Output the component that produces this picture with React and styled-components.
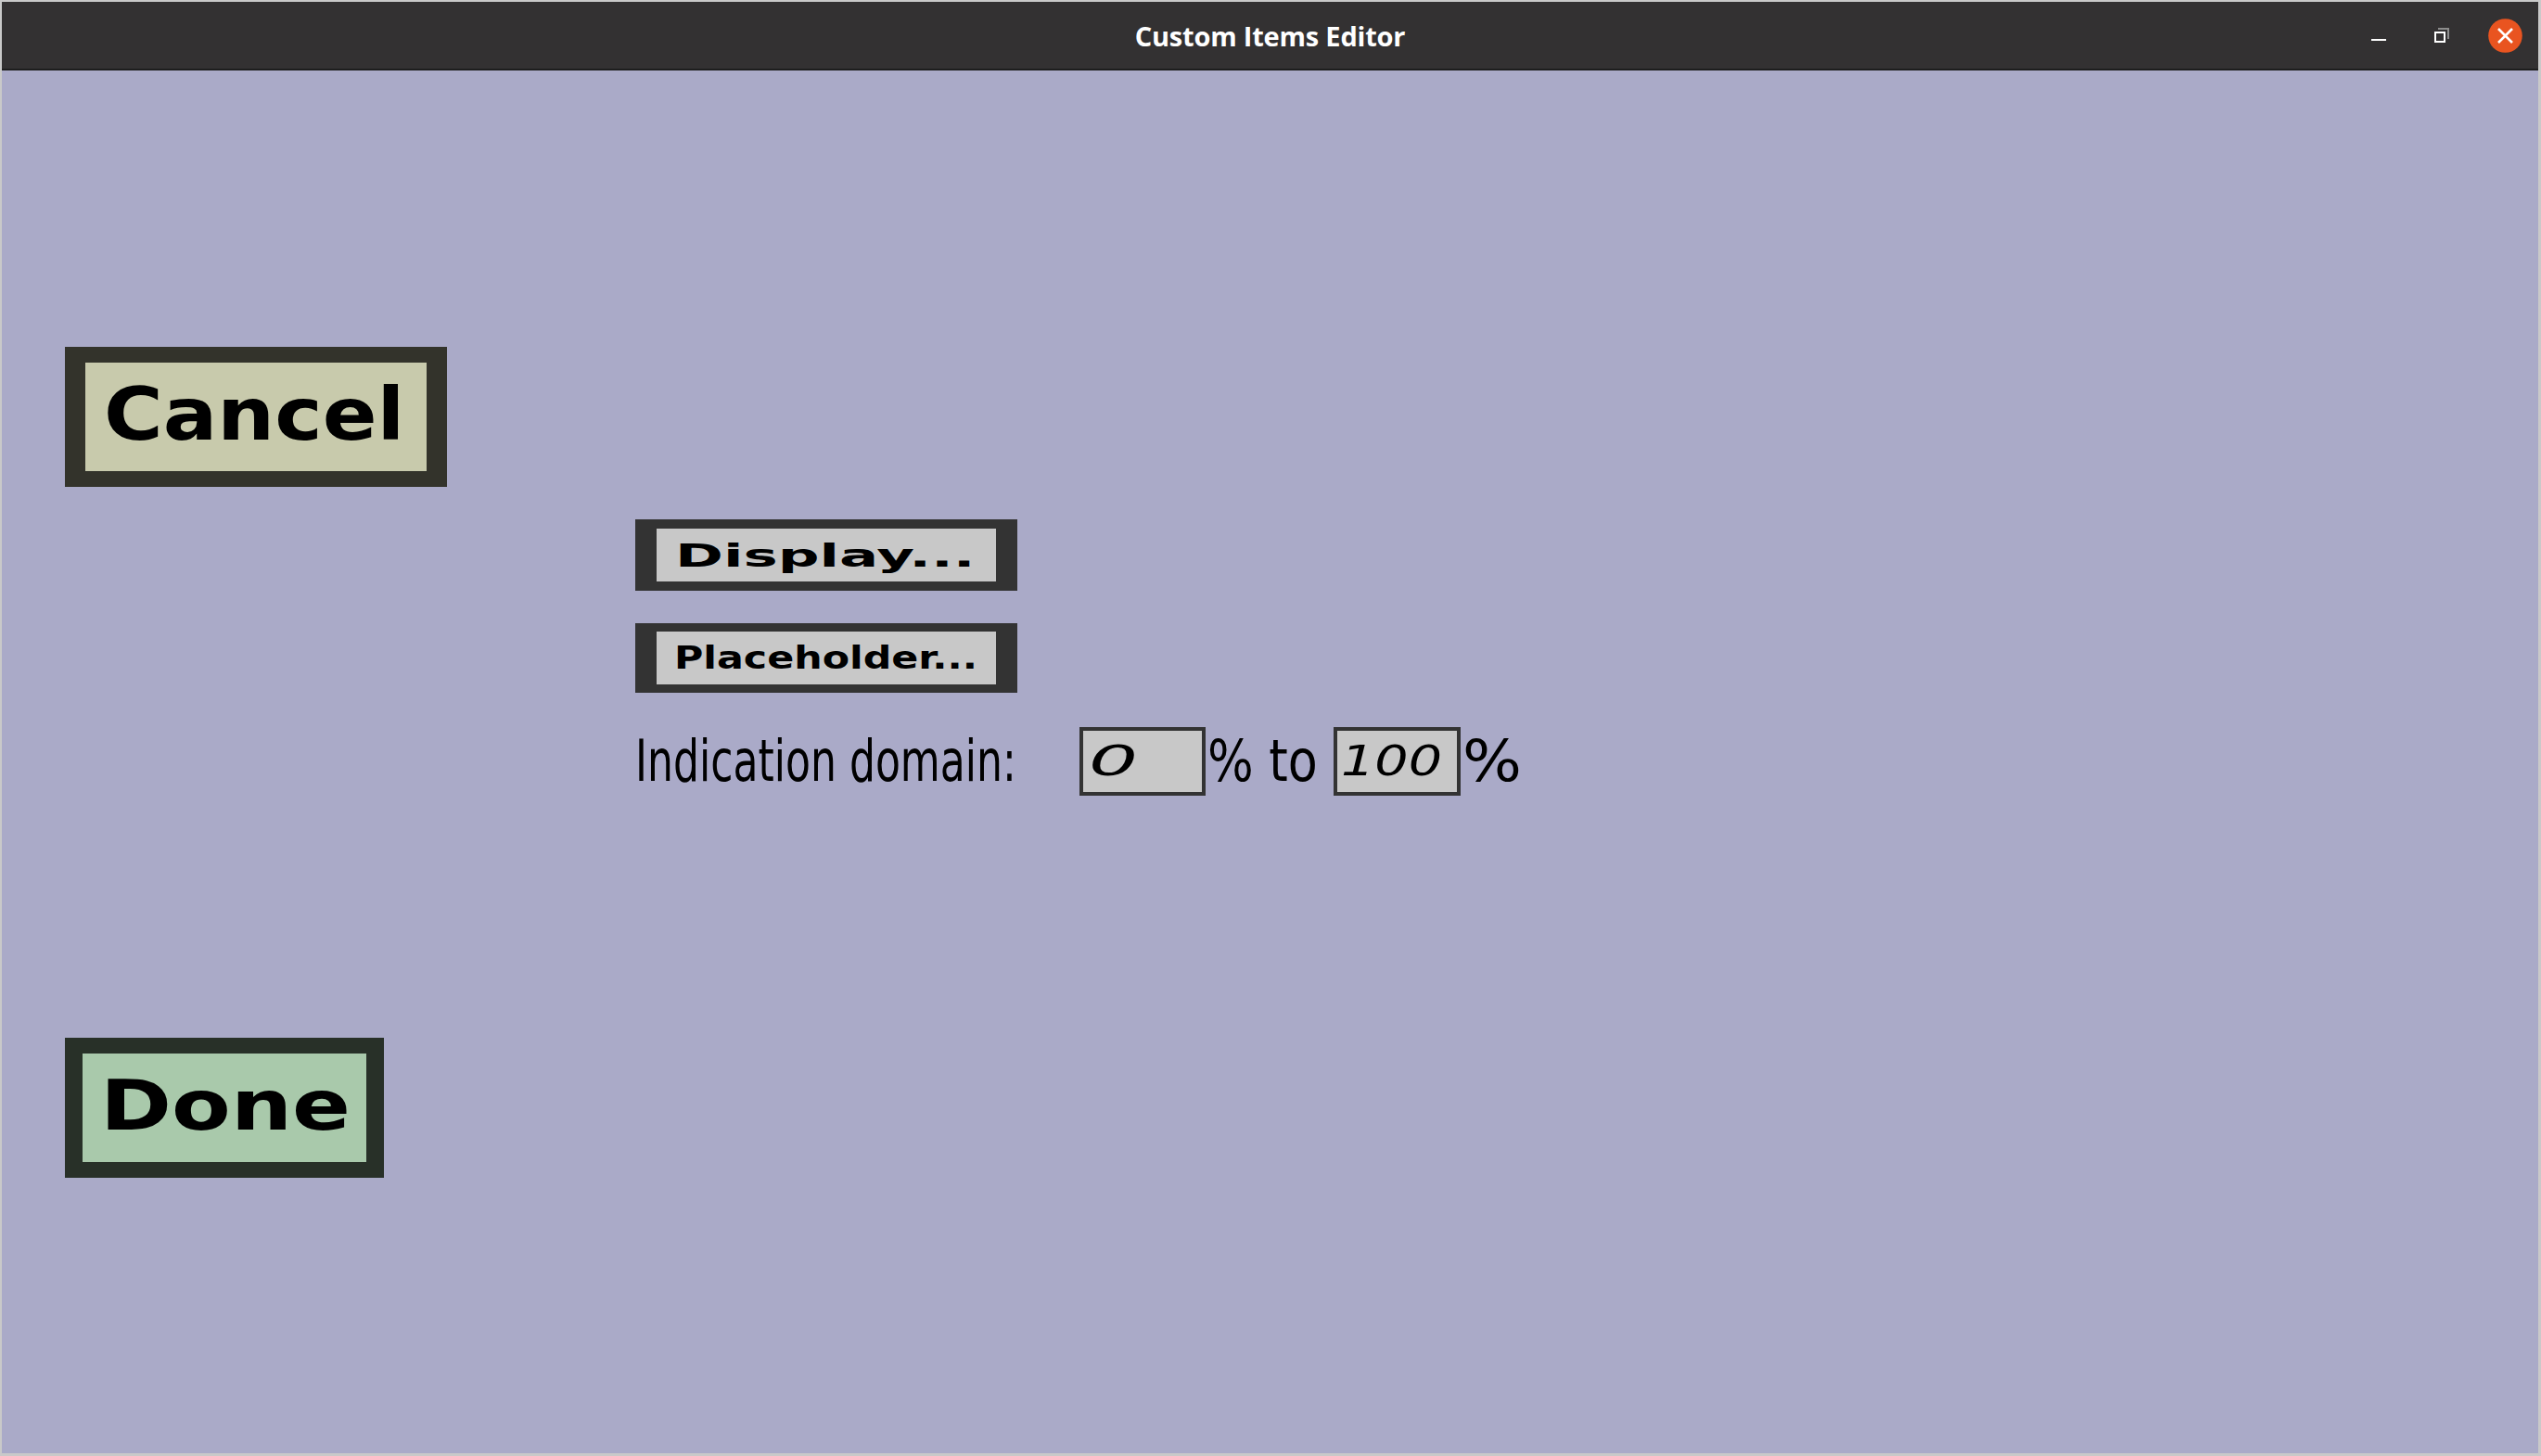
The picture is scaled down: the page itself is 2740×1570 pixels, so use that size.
import React, { useLayoutEffect, useRef, useState } from "react";
import styled, { createGlobalStyle } from "styled-components";

const Global = createGlobalStyle`
  html, body { margin: 0; padding: 0; }
  body { background: #c9c9c9; overflow: hidden; }
  #root { width: 2740px; height: 1570px; }
`;

const Window = styled.div`
  box-sizing: border-box;
  width: 2740px;
  height: 1570px;
  padding: 2px 3px 3px 2px;
  background: #c9c9c9;
  display: flex;
  flex-direction: column;
`;

const TitleBar = styled.header`
  height: 72px;
  flex: none;
  background: #333132;
  border-bottom: 2px solid #1e1e1e;
  display: grid;
  grid-template-columns: 1fr auto 1fr;
  align-items: center;
`;

const Title = styled.div`
  grid-column: 2;
  color: #ffffff;
  font-family: "Open Sans", "DejaVu Sans", sans-serif;
  font-weight: 700;
  font-size: 29px;
  letter-spacing: -0.2px;
  padding-top: 1px;
`;

const Controls = styled.div`
  grid-column: 3;
  justify-self: end;
  display: flex;
  align-items: center;
  padding-right: 17px;
`;

const CtrlBox = styled.div`
  display: flex;
  align-items: center;
  justify-content: center;
  margin-left: ${(p) => p.$ml || 0}px;
`;

const Content = styled.main`
  flex: 1;
  background: #aaaac8;
  display: flex;
  flex-direction: column;
  align-items: flex-start;
`;

const Button = styled.div`
  box-sizing: border-box;
  width: ${(p) => p.$w}px;
  height: ${(p) => p.$h}px;
  margin-top: ${(p) => p.$mt}px;
  margin-left: ${(p) => p.$ml}px;
  border-style: solid;
  border-color: ${(p) => p.$edge};
  border-width: ${(p) => p.$bv}px ${(p) => p.$bh}px;
  background: ${(p) => p.$fill};
  display: flex;
  align-items: center;
  padding-left: ${(p) => p.$pl}px;
  padding-bottom: ${(p) => p.$pb || 0}px;
  color: #000;
  font-family: "DejaVu Sans", "Verdana", sans-serif;
  font-weight: 700;
  font-size: ${(p) => p.$fs}px;
  line-height: 1;
`;

const DomainRow = styled.div`
  height: 74px;
  margin-top: 37px;
  margin-left: 683px;
  display: flex;
  align-items: center;
  font-family: "DejaVu Sans", sans-serif;
  font-size: 62px;
  line-height: 1;
  color: #000;
`;

const Spacer = styled.div`
  width: ${(p) => p.$w}px;
  flex: none;
`;

const Field = styled.div`
  box-sizing: border-box;
  flex: none;
  width: ${(p) => p.$w}px;
  height: 74px;
  border: 4px solid #333333;
  background: #c8c8c8;
  display: flex;
  align-items: center;
  padding-left: ${(p) => p.$pl}px;
  font-family: "DejaVu Sans", sans-serif;
  font-style: italic;
  font-size: 44px;
  line-height: 1;
  color: #000;
`;

const FitOuter = styled.span`
  display: inline-block;
  flex: none;
  width: ${(p) => p.$w}px;
  white-space: nowrap;
  line-height: 1;
`;

const FitInner = styled.span`
  display: inline-block;
  white-space: nowrap;
  transform-origin: 0 50%;
`;

function Fit({ w, children }) {
  const ref = useRef(null);
  const [sx, setSx] = useState(1);
  useLayoutEffect(() => {
    const measure = () => {
      const el = ref.current;
      if (!el) return;
      const nat = el.offsetWidth;
      if (nat > 0) setSx(w / nat);
    };
    measure();
    if (document.fonts && document.fonts.ready) {
      document.fonts.ready.then(measure);
    }
  }, [w]);
  return (
    <FitOuter $w={w}>
      <FitInner ref={ref} style={{ transform: `scaleX(${sx})` }}>
        {children}
      </FitInner>
    </FitOuter>
  );
}

function MinimizeIcon() {
  return (
    <svg width="16" height="16" viewBox="0 0 16 16">
      <rect x="0" y="12" width="16" height="2" fill="#ffffff" />
    </svg>
  );
}

function RestoreIcon() {
  return (
    <svg width="16" height="16" viewBox="0 0 16 16">
      <path d="M4 1 H15 V12" fill="none" stroke="#8c8c8c" strokeWidth="2" />
      <rect x="1" y="5" width="10" height="10" fill="none" stroke="#ffffff" strokeWidth="2" />
    </svg>
  );
}

function CloseIcon() {
  return (
    <svg width="37" height="37" viewBox="0 0 37 37">
      <circle cx="18.5" cy="18.5" r="18.3" fill="#e95420" />
      <path d="M11 11 L26 26 M26 11 L11 26" stroke="#ffffff" strokeWidth="2.6" strokeLinecap="butt" />
    </svg>
  );
}

export default function App() {
  return (
    <>
      <Global />
      <Window>
        <TitleBar>
          <Title>Custom Items Editor</Title>
          <Controls>
            <CtrlBox>
              <MinimizeIcon />
            </CtrlBox>
            <CtrlBox $ml={52}>
              <RestoreIcon />
            </CtrlBox>
            <CtrlBox $ml={42}>
              <CloseIcon />
            </CtrlBox>
          </Controls>
        </TitleBar>
        <Content>
          <Button
            $w={412}
            $h={151}
            $mt={298}
            $ml={68}
            $bv={17}
            $bh={22}
            $edge="#33332b"
            $fill="#c8caac"
            $pl={20}
            $pb={6}
            $fs={78}
          >
            <Fit w={324}>Cancel</Fit>
          </Button>
          <Button
            $w={412}
            $h={77}
            $mt={35}
            $ml={683}
            $bv={10}
            $bh={23}
            $edge="#333333"
            $fill="#c8c8c8"
            $pl={20}
            $fs={34}
          >
            <Fit w={324}>Display...</Fit>
          </Button>
          <Button
            $w={412}
            $h={75}
            $mt={35}
            $ml={683}
            $bv={9}
            $bh={23}
            $edge="#333333"
            $fill="#c8c8c8"
            $pl={19}
            $pb={2}
            $fs={34}
          >
            <Fit w={327}>Placeholder...</Fit>
          </Button>
          <DomainRow>
            <Fit w={411}>Indication domain:</Fit>
            <Spacer $w={68} />
            <Field $w={136} $pl={6}>
              <Fit w={53}>0</Fit>
            </Field>
            <Spacer $w={2} />
            <Fit w={119}>% to</Fit>
            <Spacer $w={17} />
            <Field $w={137} $pl={4}>
              <Fit w={109}>100</Fit>
            </Field>
            <Spacer $w={2} />
            <Fit w={64}>%</Fit>
          </DomainRow>
          <Button
            $w={344}
            $h={151}
            $mt={261}
            $ml={68}
            $bv={17}
            $bh={19}
            $edge="#283028"
            $fill="#a9c9ab"
            $pl={19}
            $pb={4}
            $fs={75}
          >
            <Fit w={270}>Done</Fit>
          </Button>
        </Content>
      </Window>
    </>
  );
}
